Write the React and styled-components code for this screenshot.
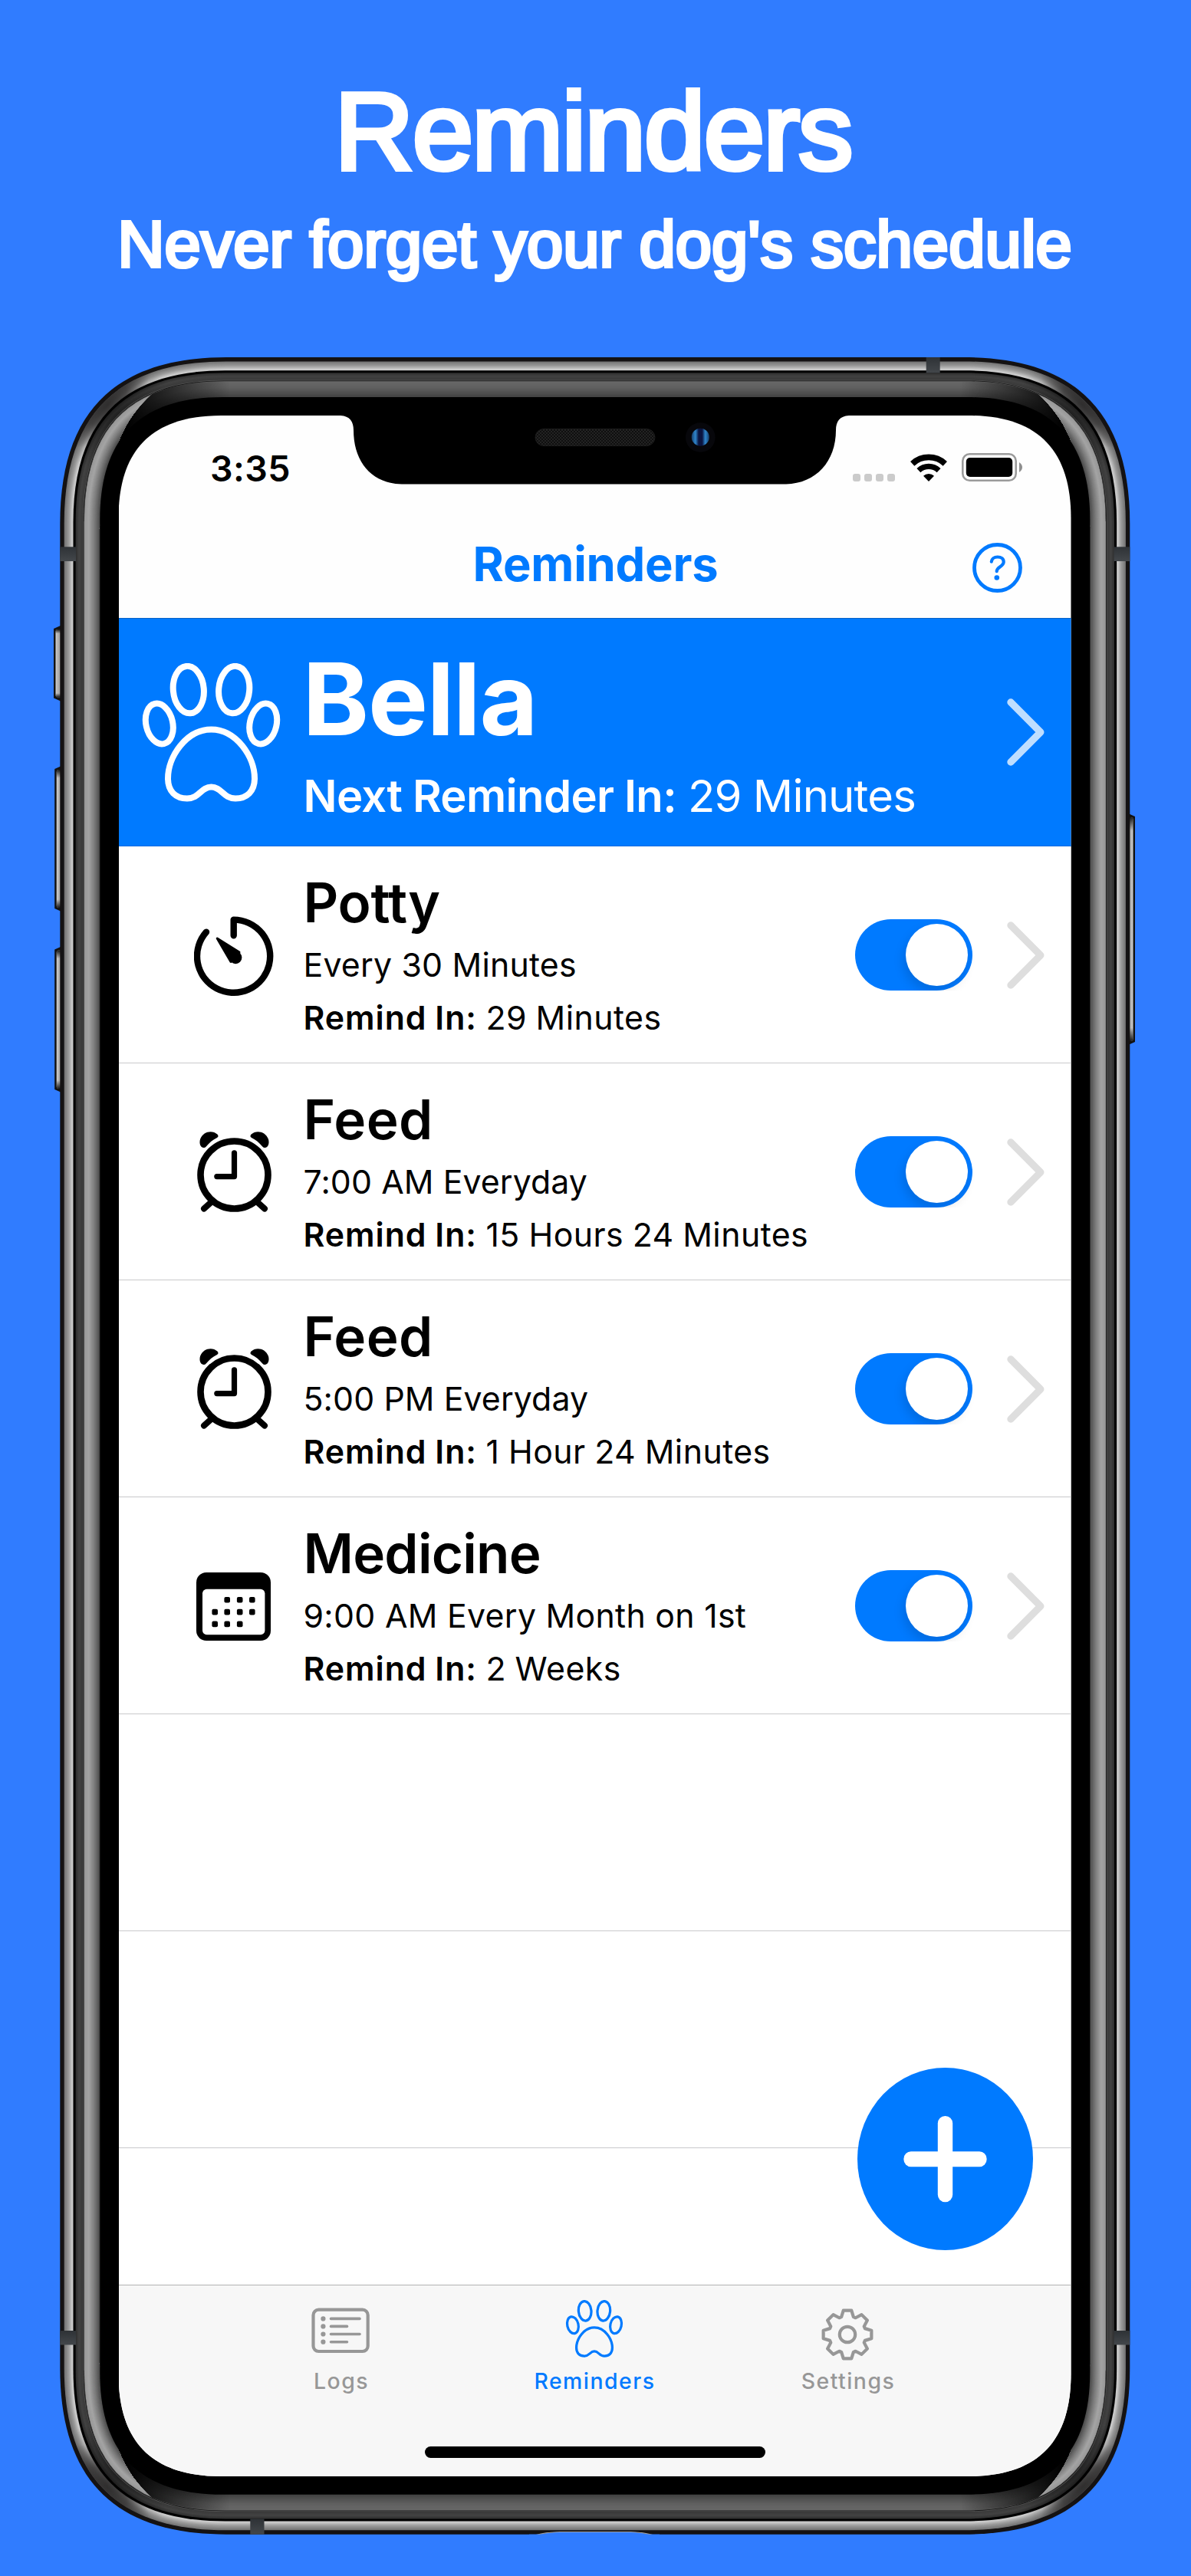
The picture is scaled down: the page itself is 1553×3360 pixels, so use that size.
import React from "react";
import styled, { createGlobalStyle } from "styled-components";

const BLUE = "#007aff";
const BACKDROP = "#307cff";

/* ---------- geometry helpers ---------- */

const DEVICE = { left: 78.3, top: 466, right: 1473.3, bottom: 3305.7 };

// Rectangle with continuous-curvature corners.
const smoothRect = (x0, y0, x1, y1, e, k = 0.67) => {
  const c = e * (1 - k);
  return [
    `M${x0 + e} ${y0}`,
    `H${x1 - e}`,
    `C${x1 - c} ${y0} ${x1} ${y0 + c} ${x1} ${y0 + e}`,
    `V${y1 - e}`,
    `C${x1} ${y1 - c} ${x1 - c} ${y1} ${x1 - e} ${y1}`,
    `H${x0 + e}`,
    `C${x0 + c} ${y1} ${x0} ${y1 - c} ${x0} ${y1 - e}`,
    `V${y0 + e}`,
    `C${x0} ${y0 + c} ${x0 + c} ${y0} ${x0 + e} ${y0}`,
    "Z",
  ].join("");
};

const ring = (inset) =>
  smoothRect(
    DEVICE.left + inset,
    DEVICE.top + inset,
    DEVICE.right - inset,
    DEVICE.bottom - inset,
    217 - inset * 1.1
  );

const mix = (stops, t) => {
  let i = 0;
  while (i < stops.length - 2 && t > stops[i + 1][0]) i += 1;
  const [a, va] = stops[i];
  const [b, vb] = stops[i + 1];
  const v = Math.round(va + ((vb - va) * (t - a)) / (b - a));
  return `rgb(${v},${v},${v})`;
};

const bands = (from, to, step, stops) => {
  const out = [];
  for (let d = from; d < to; d += step) {
    out.push({ inset: d, color: mix(stops, (d - from) / (to - from)) });
  }
  return out;
};

const STEEL = bands(5.4, 17.2, 0.8, [[0, 116], [0.5, 158], [0.85, 205], [1, 196]]);
const RIM = bands(20.3, 30, 1, [[0, 48], [0.4, 66], [1, 56]]);
const GLASS_SIDE = bands(31.6, 53.2, 0.9, [[0, 152], [0.25, 164], [0.6, 122], [1, 62]]);
const GLASS_TOP = bands(31.2, 51.4, 0.9, [[0, 104], [0.4, 96], [1, 66]]);

/* ---------- page ---------- */

const GlobalStyle = createGlobalStyle`
  *, *::before, *::after { box-sizing: border-box; }
  body {
    margin: 0;
    background: ${BACKDROP};
    font-family: Inter, "Liberation Sans", sans-serif;
    color: #000;
  }
`;

const Page = styled.main`
  display: flex;
  flex-direction: column;
  width: 1553px;
  height: 3360px;
  overflow: hidden;
  background: ${BACKDROP};
`;

const Hero = styled.header`
  height: 466px;
  padding: 87px 6px 0 0;
  text-align: center;
  white-space: nowrap;
  color: #fff;
  font-family: "Liberation Sans", Arial, sans-serif;
`;

const HeroTitle = styled.h1`
  margin: 0;
  font-size: 143px;
  line-height: 170px;
  font-weight: 400;
  letter-spacing: -1.9px;
  -webkit-text-stroke: 6px #fff;
`;

const HeroTagline = styled.p`
  margin: 0;
  padding-left: 4px;
  font-size: 85px;
  line-height: 124px;
  -webkit-text-stroke: 4.2px #fff;
`;

const Device = styled.section`
  position: relative;
  flex: none;
  height: 2894px;
  padding: 76px 156.5px 0 154.5px;
`;

const Chassis = styled.svg`
  position: absolute;
  inset: 0;
  width: 1553px;
  height: 2894px;
`;

const Screen = styled.div`
  position: relative;
  display: flex;
  flex-direction: column;
  width: 1242px;
  height: 2688px;
  background: #fefefe;
  clip-path: path("${smoothRect(0, 0, 1242, 2688, 134)}");
`;

const Notch = styled.svg`
  position: absolute;
  top: 0;
  left: 285.5px;
  width: 672px;
  height: 90px;
`;

/* ---------- status + navigation ---------- */

const StatusBar = styled.div`
  display: flex;
  align-items: center;
  justify-content: space-between;
  flex: none;
  height: 137px;
  padding: 0 63.5px 0 119.5px;
`;

const Clock = styled.span`
  font-size: 46.5px;
  line-height: 60px;
  font-weight: 580;
  letter-spacing: 0.4px;
`;

const StatusIcons = styled.div`
  display: flex;
  align-items: flex-end;
  gap: 19.5px;
  height: 37px;
  margin-top: -2px;
`;

const SignalDots = styled.div`
  display: flex;
  gap: 5px;
`;

const SignalDot = styled.i`
  width: 10px;
  height: 10px;
  border-radius: 3px;
  background: #cbcbcb;
`;

const NavBar = styled.div`
  display: grid;
  grid-template-columns: 1fr auto 1fr;
  align-items: center;
  flex: none;
  height: 127px;
  padding: 0 63.5px 13px;
`;

const NavTitle = styled.h2`
  grid-column: 2;
  margin: 0;
  padding-left: 2px;
  font-size: 61.5px;
  line-height: 80px;
  font-weight: 650;
  letter-spacing: -0.25px;
  color: ${BLUE};
`;

const HelpButton = styled.button`
  justify-self: end;
  width: 65px;
  height: 65px;
  margin: 8px 0 0;
  padding: 0;
  border: 0;
  background: none;
  line-height: 0;
`;

/* ---------- list ---------- */

const Banner = styled.div`
  display: grid;
  grid-template-columns: 240px 1fr auto;
  align-items: center;
  flex: none;
  height: 298px;
  padding-right: 35px;
  border-top: 1px solid #0a62c4;
  border-bottom: 1px solid #0a6be0;
  background: ${BLUE};
  color: #fff;
`;

const BannerIcon = styled.div`
  padding-left: 30px;
  line-height: 0;
`;

const BannerText = styled.div`
  align-self: start;
  padding-top: 29.5px;
  white-space: nowrap;
`;

const DogName = styled.div`
  font-size: 131px;
  line-height: 150px;
  font-weight: 700;
  letter-spacing: -1.2px;
`;

const NextReminder = styled.div`
  padding-left: 1px;
  font-size: 58px;
  line-height: 103px;
  font-weight: 370;
  letter-spacing: -0.8px;
  word-spacing: -0.5px;
`;

const Strong = styled.strong`
  font-weight: 600;
  letter-spacing: ${(p) => p.$tracking}px;
`;

const List = styled.ul`
  flex: 1;
  min-height: 0;
  overflow: hidden;
  margin: 0;
  padding: 0;
  list-style: none;
  background: #fff;
`;

const Row = styled.li`
  display: grid;
  grid-template-columns: 240px 1fr auto auto;
  align-items: center;
  height: 283px;
  padding-right: 35px;
  border-bottom: 1.5px solid #c9c9cb;
`;

const RowIcon = styled.div`
  display: flex;
  justify-content: center;
  width: ${(p) => p.$span}px;
  padding-top: ${(p) => p.$drop}px;
`;

const RowText = styled.div`
  align-self: start;
  padding: 26px 0 0 1px;
  white-space: nowrap;
`;

const RowTitle = styled.div`
  font-size: 71px;
  line-height: 94px;
  font-weight: 620;
  letter-spacing: ${(p) => p.$tracking}px;
`;

const RowLine = styled.div`
  font-size: 42.8px;
  line-height: 69px;
  letter-spacing: ${(p) => p.$tracking}px;
  word-spacing: ${(p) => p.$gap || 0}px;
`;

const Toggle = styled.span`
  display: flex;
  justify-content: flex-end;
  width: 153px;
  height: 93px;
  margin: 1px 44.5px 0 0;
  padding: 6px;
  border-radius: 46.5px;
  background: ${BLUE};
`;

const Knob = styled.i`
  width: 81px;
  height: 81px;
  border-radius: 50%;
  background: #fff;
  box-shadow: -3px 7px 14px rgba(0, 0, 0, 0.13);
`;

const ToggleClip = styled.span`
  overflow: hidden;
`;

const RowChevron = styled.span`
  padding-top: 2.5px;
  line-height: 0;
`;

const AddButton = styled.button`
  position: absolute;
  left: 963.5px;
  top: 2155px;
  width: 229px;
  height: 238px;
  padding: 0;
  border: 0;
  background: none;
  line-height: 0;
`;

/* ---------- tab bar ---------- */

const TabBar = styled.nav`
  flex: none;
  height: 250px;
  border-top: 1.5px solid #b2b2b2;
  background: #f7f7f7;
`;

const Tabs = styled.div`
  display: flex;
  justify-content: center;
  padding: 8.5px 2px 0 0;
`;

const Tab = styled.div`
  display: flex;
  flex-direction: column;
  align-items: center;
  width: 330.5px;
  font-size: 28.4px;
  line-height: 32px;
  font-weight: 500;
  letter-spacing: 1.5px;
  color: ${(p) => (p.$active ? BLUE : "#979797")};
`;

const TabLabel = styled.span`
  padding-left: 2px;
`;

const HomeIndicator = styled.div`
  width: 444px;
  height: 15px;
  margin: 69.5px auto 0;
  border-radius: 8px;
  background: #000;
`;

/* ---------- icons ---------- */

const Paw = ({ size = 181, stroke = 8 }) => (
  <svg width={size} height={size} viewBox="0 0 181 181" fill="none" stroke="currentColor" strokeWidth={stroke}>
    <ellipse cx="22.8" cy="79" rx="17.4" ry="26.8" transform="rotate(-13 22.8 79)" />
    <ellipse cx="60.8" cy="34.6" rx="20" ry="30.8" transform="rotate(-5 60.8 34.6)" />
    <ellipse cx="120.2" cy="34.6" rx="20" ry="30.8" transform="rotate(5 120.2 34.6)" />
    <ellipse cx="158.2" cy="79" rx="17.4" ry="26.800" transform="rotate(13 158.2 79)" />
    <path d="M90.5 86.5C58 86.5 34 122 34 150.500C34 167 44 176.500 59 176.500C75 176.500 77 161.500 90.500 161.500C104 161.500 106 176.500 122 176.500C137 176.500 147 167 147 150.500C147 122 123 86.500 90.500 86.500Z" />
  </svg>
);

const TimerIcon = () => (
  <svg width="104" height="104" viewBox="0 0 104 104">
    <path
      d="M51.7 25.3V4.6A47.6 47.6 0 1 1 16 20.6"
      fill="none"
      stroke="#000"
      strokeWidth="8.4"
      strokeLinecap="round"
      strokeLinejoin="round"
    />
    <circle cx="54.2" cy="54" r="8.2" />
    <path d="M30.2 29L59 47L48 59.4Z" stroke="#000" strokeWidth="3" strokeLinejoin="round" />
  </svg>
);

const AlarmIcon = () => (
  <svg width="97" height="105" viewBox="0 0 97 105">
    <g fill="none" stroke="#000" strokeLinecap="round">
      <circle cx="48.5" cy="56.5" r="44" strokeWidth="8.6" />
      <path d="M48.5 27.8V58.6H25.8" strokeWidth="7.2" strokeLinejoin="round" />
      <path d="M9 100.5L19 91.5M88 100.5L78 91.5" strokeWidth="8" />
    </g>
    <path d="M8.5 21C3.5 20.5 2.6 14 4.2 9.6C8 -0.5 20 -2.5 26.4 3.6C28.2 5.4 27.6 7.2 26 8C20.5 10.8 16 14.4 11.8 19.4Q10.3 21.2 8.5 21Z" />
    <path d="M88.5 21C93.5 20.5 94.4 14 92.8 9.6C89 -0.5 77 -2.5 70.6 3.6C68.8 5.4 69.4 7.2 71 8C76.5 10.8 81 14.4 85.2 19.4Q86.7 21.2 88.5 21Z" />
  </svg>
);

const CALENDAR_DAYS = [
  [40.2, 35.8], [56.7, 35.8], [72.8, 35.8],
  [24.2, 51.6], [40.2, 51.6], [56.7, 51.6], [72.8, 51.6],
  [24.2, 67.4], [40.2, 67.4], [56.7, 67.4],
];

const CalendarIcon = () => (
  <svg width="97" height="89" viewBox="0 0 97 89">
    <rect width="97" height="89" rx="13" />
    <rect x="8" y="21.8" width="81.4" height="59.4" rx="5.5" fill="#fff" />
    {CALENDAR_DAYS.map(([x, y]) => (
      <rect key={`${x}-${y}`} x={x - 3.8} y={y - 3.8} width="7.6" height="7.6" rx="2" />
    ))}
  </svg>
);

const Chevron = ({ color }) => (
  <svg width="49" height="88" viewBox="0 0 49 88">
    <path
      d="M5 5L43.8 44L5 83"
      fill="none"
      stroke={color}
      strokeWidth="9.4"
      strokeLinecap="round"
      strokeLinejoin="round"
    />
  </svg>
);

const WifiIcon = () => (
  <svg width="48" height="36" viewBox="0 0 48 36" fill="none" stroke="#000">
    <path d="M2.7 12.8A31.4 31.4 0 0 1 45.3 12.8" strokeWidth="7.8" />
    <path d="M10.9 21.6A19.2 19.2 0 0 1 37.1 21.6" strokeWidth="7.2" />
    <path d="M24 36L17 28.7A10.4 10.4 0 0 1 31 28.7Z" fill="#000" stroke="none" />
  </svg>
);

const BatteryIcon = () => (
  <svg width="79" height="37" viewBox="0 0 79 37">
    <rect x="1.3" y="1.3" width="69.4" height="34.4" rx="9" fill="none" stroke="#9b9b9b" strokeWidth="2.6" />
    <rect x="5.8" y="6" width="60.4" height="25" rx="5" />
    <path d="M75 12V25Q79 22.4 79 18.5Q79 14.6 75 12Z" fill="#8f8f8f" />
  </svg>
);

const HelpIcon = () => (
  <svg width="65" height="65" viewBox="0 0 65 65" fill="none" stroke={BLUE}>
    <circle cx="32.5" cy="32.5" r="30" strokeWidth="4.8" />
    <path
      d="M24.8 24.7C25.1 20.8 28.4 18.5 32.8 18.5C37.4 18.5 40.7 21 40.7 25C40.7 31.2 31.7 31.2 31.7 37.2"
      strokeWidth="4.2"
      strokeLinecap="round"
    />
    <circle cx="31.8" cy="45.5" r="3.3" fill={BLUE} stroke="none" />
  </svg>
);

const TabGlyph = styled.svg`
  width: 100px;
  height: 100px;
  overflow: visible;
`;

const LogsIcon = () => (
  <TabGlyph viewBox="0 0 100 100" fill="none" stroke="currentColor">
    <rect x="14.5" y="22.7" width="71.2" height="54.3" rx="7" strokeWidth="4.2" />
    {[34.4, 44.4, 54.5, 64.7].map((y, i) => (
      <g key={y}>
        <circle cx="27.4" cy={y} r="3.1" fill="currentColor" stroke="none" />
        <path d={`M37.5 ${y}H${i % 2 ? 58.5 : 75}`} strokeWidth="3.6" strokeLinecap="round" />
      </g>
    ))}
  </TabGlyph>
);

const PawTabIcon = () => (
  <TabGlyph viewBox="0 0 100 100">
    <g transform="translate(12.5 10)">
      <Paw size={75} stroke={7.8} />
    </g>
  </TabGlyph>
);

const gearOutline = () => {
  const pts = [];
  for (let i = 0; i < 8; i += 1) {
    [[-19, 24.2], [-9.5, 31.8], [9.5, 31.8], [19, 24.2]].forEach(([a, r]) => {
      const t = ((i * 45 + a) * Math.PI) / 180;
      pts.push(`${(50 + r * Math.sin(t)).toFixed(2)} ${(55 - r * Math.cos(t)).toFixed(2)}`);
    });
  }
  return `M${pts.join("L")}Z`;
};

const GearIcon = () => (
  <TabGlyph viewBox="0 0 100 100" fill="none" stroke="currentColor" strokeWidth="4.2" strokeLinejoin="round">
    <path d={gearOutline()} />
    <circle cx="50" cy="55" r="10.2" />
  </TabGlyph>
);

const PlusIcon = () => (
  <svg width="229" height="238" viewBox="0 0 229 238">
    <ellipse cx="114.5" cy="119" rx="114.5" ry="119" fill={BLUE} />
    <rect x="60.4" y="109.3" width="108.2" height="20" rx="9.5" fill="#fff" />
    <rect x="104.8" y="63" width="19.4" height="112.2" rx="9.5" fill="#fff" />
  </svg>
);

/* ---------- device drawing ---------- */

const CORNERS = [
  [1, 1, 0, 0],
  [-1, 1, 1551.6, 0],
  [1, -1, 0, 3771.7],
  [-1, -1, 1551.6, 3771.7],
];

const SideKey = ({ x, y, height, flip }) => (
  <g transform={flip ? `translate(${x + 12} 0) scale(-1 1)` : `translate(${x} 0)`}>
    <path d={`M0 ${y + 4}L9 ${y}V${y + height}L0 ${y + height - 4}Z`} fill="#121212" />
    <rect x="2.5" y={y + 5} width="8.5" height={height - 10} rx="3" fill="url(#key)" />
    <rect x="2.5" y={y + 5} width="8.5" height={height - 10} rx="3" fill="url(#keyEnds)" />
  </g>
);

const GLASS_SPLIT = "M60 440H178L198 514C180 530 166 548 155 575L129 690V1886H60Z";

const ChassisArt = () => (
  <Chassis viewBox="0 466 1553 2894">
    <defs>
      <linearGradient id="key" x1="0" x2="1" y1="0" y2="0">
        <stop offset="0" stopColor="#d2d2d2" />
        <stop offset="0.35" stopColor="#b0b0b0" />
        <stop offset="1" stopColor="#989898" />
      </linearGradient>
      <linearGradient id="keyEnds" x1="0" x2="0" y1="0" y2="1">
        <stop offset="0" stopColor="#000" stopOpacity="0.85" />
        <stop offset="0.06" stopColor="#000" stopOpacity="0" />
        <stop offset="0.94" stopColor="#000" stopOpacity="0" />
        <stop offset="1" stopColor="#000" stopOpacity="0.85" />
      </linearGradient>
      <radialGradient id="steelShade">
        <stop offset="0" stopColor="#2c2a2a" stopOpacity="0.85" />
        <stop offset="0.45" stopColor="#2c2a2a" stopOpacity="0.65" />
        <stop offset="1" stopColor="#2c2a2a" stopOpacity="0" />
      </radialGradient>
      <radialGradient id="rimShade">
        <stop offset="0" stopColor="#000" stopOpacity="0.5" />
        <stop offset="1" stopColor="#000" stopOpacity="0" />
      </radialGradient>
      <linearGradient id="topFade" gradientUnits="userSpaceOnUse" x1="165" x2="300" y1="0" y2="0">
        <stop offset="0" stopColor="#000" stopOpacity="1" />
        <stop offset="0.35" stopColor="#000" stopOpacity="0.65" />
        <stop offset="1" stopColor="#000" stopOpacity="0" />
      </linearGradient>
      <linearGradient id="antenna" x1="0" x2="0" y1="0" y2="1">
        <stop offset="0" stopColor="#2e3236" />
        <stop offset="1" stopColor="#43474b" />
      </linearGradient>
      <clipPath id="steelClip"><path d={ring(5.4)} /></clipPath>
      <clipPath id="glassClip"><path d={ring(31.4)} /></clipPath>
      <clipPath id="sideClip">
        {CORNERS.map(([sx, sy, tx, ty]) => (
          <path key={`${sx}${sy}`} d={GLASS_SPLIT} transform={`matrix(${sx} 0 0 ${sy} ${tx} ${ty})`} />
        ))}
      </clipPath>
    </defs>

    <SideKey x={70} y={816} height={98.5} />
    <SideKey x={71.2} y={999} height={190} />
    <SideKey x={71.2} y={1234.5} height={190.5} />
    <SideKey x={1468} y={1061} height={302} flip />

    <path d={ring(0)} fill="#141213" />
    {STEEL.map((b) => (
      <path key={b.inset} d={ring(b.inset)} fill={b.color} />
    ))}
    <g clipPath="url(#steelClip)">
      {CORNERS.map(([sx, sy, tx, ty]) => (
        <ellipse
          key={`${sx}${sy}`}
          cx="140"
          cy="528"
          rx="72"
          ry="30"
          fill="url(#steelShade)"
          transform={`matrix(${sx} 0 0 ${sy} ${tx} ${ty}) rotate(-46 140 528)`}
        />
      ))}
    </g>
    <path d={ring(17.2)} fill="#000" />
    {RIM.map((b) => (
      <path key={b.inset} d={ring(b.inset)} fill={b.color} />
    ))}
    <g clipPath="url(#steelClip)">
      {CORNERS.map(([sx, sy, tx, ty]) => (
        <ellipse
          key={`${sx}${sy}`}
          cx="155"
          cy="545"
          rx="80"
          ry="40"
          fill="url(#rimShade)"
          transform={`matrix(${sx} 0 0 ${sy} ${tx} ${ty}) rotate(-46 155 545)`}
        />
      ))}
    </g>
    <path d={ring(29.6)} fill="#505050" />
    <path d={ring(30.4)} fill="#161616" />

    {GLASS_TOP.map((b) => (
      <path key={b.inset} d={ring(b.inset)} fill={b.color} />
    ))}
    <g clipPath="url(#glassClip)">
      {CORNERS.map(([sx, sy, tx, ty]) => (
        <rect
          key={`${sx}${sy}`}
          x="100"
          y="480"
          width="205"
          height="200"
          fill="url(#topFade)"
          transform={`matrix(${sx} 0 0 ${sy} ${tx} ${ty})`}
        />
      ))}
    </g>
    <g clipPath="url(#sideClip)">
      {GLASS_SIDE.map((b) => (
        <path key={b.inset} d={ring(b.inset)} fill={b.color} />
      ))}
    </g>
    <path d={ring(52)} fill="#000" />

    <rect x="78.3" y="713.3" width="20.7" height="18.7" fill="url(#antenna)" />
    <rect x="78.3" y="3040" width="20.7" height="18.5" fill="url(#antenna)" />
    <rect x="1452.6" y="713.3" width="20.7" height="18.7" fill="url(#antenna)" />
    <rect x="1452.6" y="3040" width="20.7" height="18.5" fill="url(#antenna)" />
    <rect x="1207.7" y="466" width="18" height="20.3" fill="url(#antenna)" />
    <rect x="326.3" y="3285.4" width="18.2" height="20.3" fill="url(#antenna)" />

    <path d="M699 3306.5Q712 3303 730 3302.5H822Q838 3303 851 3306.5Z" fill={BACKDROP} stroke="#9c9c9c" strokeWidth="1.2" />
    <rect x="690" y="3305.7" width="170" height="4" fill={BACKDROP} />
  </Chassis>
);

const NotchArt = () => (
  <Notch viewBox="0 0 672 90">
    <defs>
      <pattern id="mesh" width="4" height="4" patternUnits="userSpaceOnUse">
        <rect width="4" height="4" fill="#232323" />
        <circle cx="1" cy="1" r="1" fill="#080808" />
        <circle cx="3" cy="3" r="1" fill="#080808" />
      </pattern>
      <linearGradient id="lens" x1="0" x2="1" y1="0" y2="0">
        <stop offset="0" stopColor="#17406e" />
        <stop offset="0.22" stopColor="#2f86cc" />
        <stop offset="0.4" stopColor="#0a1440" />
        <stop offset="0.6" stopColor="#0a1440" />
        <stop offset="0.78" stopColor="#2f86cc" />
        <stop offset="1" stopColor="#17406e" />
      </linearGradient>
    </defs>
    <path d="M0 0H4C16 0.5 21 8 21 19C21 60 44 88.5 84 89.5H585C624 88.5 650 60 650 19C650 8 655 0.5 667 0H672V-2H0Z" />
    <rect x="258" y="17.5" width="156" height="22" rx="11" fill="url(#mesh)" stroke="#1c1c1c" />
    <circle cx="473.3" cy="28.5" r="19.3" fill="#07070b" />
    <circle cx="473.3" cy="28.2" r="11.5" fill="url(#lens)" />
  </Notch>
);

/* ---------- content ---------- */

const REMINDERS = [
  { title: "Potty", tracking: -0.3, schedule: "Every 30 Minutes", lineTracking: 0.2, due: "29 Minutes", Icon: TimerIcon, drop: 3, span: 301 },
  { title: "Feed", tracking: 0.4, schedule: "7:00 AM Everyday", lineTracking: 0.1, due: "15 Hours 24 Minutes", Icon: AlarmIcon, drop: 0, span: 301 },
  { title: "Feed", tracking: 0.4, schedule: "5:00 PM Everyday", lineTracking: 0.1, due: "1 Hour 24 Minutes", Icon: AlarmIcon, drop: 0, span: 301 },
  { title: "Medicine", tracking: -0.8, schedule: "9:00 AM Every Month on 1st", lineTracking: 0.3, due: "2 Weeks", Icon: CalendarIcon, drop: 3, span: 299 },
];

const ReminderRow = ({ title, tracking, schedule, lineTracking, due, Icon, drop, span }) => (
  <Row>
    <RowIcon $drop={drop} $span={span}>
      <Icon />
    </RowIcon>
    <RowText>
      <RowTitle $tracking={tracking}>{title}</RowTitle>
      <RowLine $tracking={lineTracking}>{schedule}</RowLine>
      <RowLine $tracking={0.45} $gap={-0.9}>
        <Strong $tracking={0.95}>Remind In:</Strong> {due}
      </RowLine>
    </RowText>
    <ToggleClip>
      <Toggle>
        <Knob />
      </Toggle>
    </ToggleClip>
    <RowChevron>
      <Chevron color="#dedede" />
    </RowChevron>
  </Row>
);

export default function App() {
  return (
    <Page>
      <GlobalStyle />
      <Hero>
        <HeroTitle>Reminders</HeroTitle>
        <HeroTagline>Never forget your dog's schedule</HeroTagline>
      </Hero>

      <Device>
        <ChassisArt />
        <Screen>
          <StatusBar>
            <Clock>3:35</Clock>
            <StatusIcons>
              <SignalDots>
                <SignalDot />
                <SignalDot />
                <SignalDot />
                <SignalDot />
              </SignalDots>
              <WifiIcon />
              <BatteryIcon />
            </StatusIcons>
          </StatusBar>

          <NavBar>
            <NavTitle>Reminders</NavTitle>
            <HelpButton aria-label="Help">
              <HelpIcon />
            </HelpButton>
          </NavBar>

          <Banner>
            <BannerIcon>
              <Paw />
            </BannerIcon>
            <BannerText>
              <DogName>Bella</DogName>
              <NextReminder>
                <Strong $tracking={-0.65}>Next Reminder In:</Strong> 29 Minutes
              </NextReminder>
            </BannerText>
            <Chevron color="#bfdeff" />
          </Banner>

          <List>
            {REMINDERS.map((r, i) => (
              <ReminderRow key={i} {...r} />
            ))}
            <Row />
            <Row />
          </List>

          <TabBar>
            <Tabs>
              <Tab>
                <LogsIcon />
                <TabLabel>Logs</TabLabel>
              </Tab>
              <Tab $active>
                <PawTabIcon />
                <TabLabel>Reminders</TabLabel>
              </Tab>
              <Tab>
                <GearIcon />
                <TabLabel>Settings</TabLabel>
              </Tab>
            </Tabs>
            <HomeIndicator />
          </TabBar>

          <AddButton aria-label="Add reminder">
            <PlusIcon />
          </AddButton>
          <NotchArt />
        </Screen>
      </Device>
    </Page>
  );
}
